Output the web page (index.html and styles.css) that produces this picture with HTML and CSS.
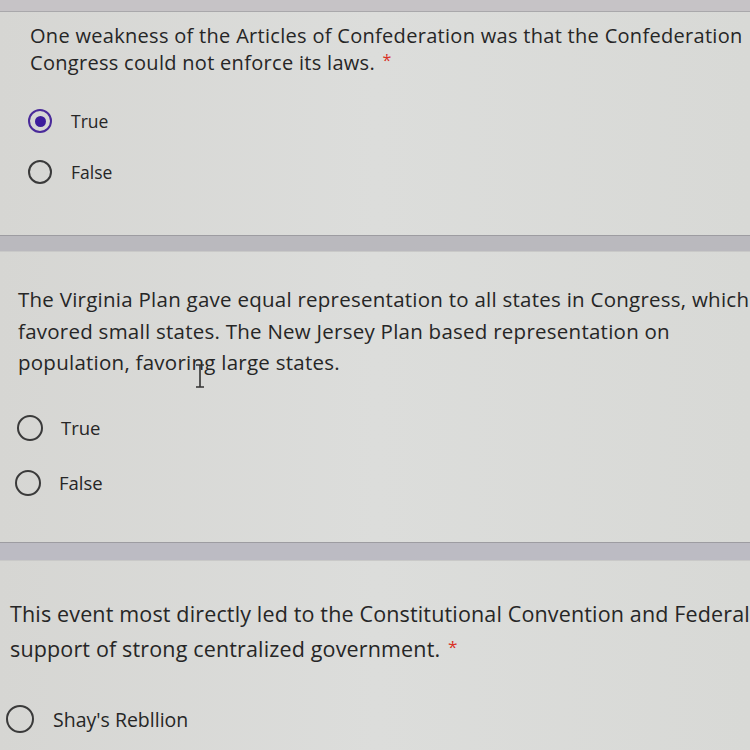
FILE: index.html
```
<!DOCTYPE html>
<html>
<head>
<meta charset="utf-8">
<link rel="stylesheet" href="styles.css">
</head>
<body>
<div class="page">
  <div class="topband"></div>
  <section class="card c1">
    <div class="q">One weakness of the Articles of Confederation was that the Confederation<br>Congress could not enforce its laws. <span class="req">*</span></div>
    <div class="opts">
      <div class="opt"><span class="radio on"><span class="dot"></span></span><span class="lbl">True</span></div>
      <div class="opt"><span class="radio"></span><span class="lbl">False</span></div>
    </div>
  </section>
  <div class="gap"></div>
  <section class="card c2">
    <div class="q">The Virginia Plan gave equal representation to all states in Congress, which<br>favored small states. The New Jersey Plan based representation on<br>population, favoring large states.</div>
    <svg class="ibeam" width="12" height="24" viewBox="0 0 12 24"><path d="M2 1h8M6 1v22M2 23h8" stroke="#333" stroke-width="1.6" fill="none"/></svg>
    <div class="opts">
      <div class="opt"><span class="radio"></span><span class="lbl">True</span></div>
      <div class="opt"><span class="radio"></span><span class="lbl">False</span></div>
    </div>
  </section>
  <div class="gap g2"></div>
  <section class="card c3">
    <div class="q">This event most directly led to the Constitutional Convention and Federalists'<br>support of strong centralized government. <span class="req">*</span></div>
    <div class="opts">
      <div class="opt"><span class="radio"></span><span class="lbl">Shay's Rebllion</span></div>
    </div>
  </section>
</div>
</body>
</html>
```
FILE: styles.css
```
html, body {
  margin: 0;
  padding: 0;
  background: #d9d9d6;
}
.page {
  width: 750px;
  height: 750px;
  overflow: hidden;
  display: flex;
  flex-direction: column;
  font-family: "Open Sans", "Liberation Sans", sans-serif;
  color: #262626;
}
.topband {
  height: 11px;
  flex: none;
  background: #c6c3c6;
  border-bottom: 1.5px solid #a9a8ab;
}
.card {
  flex: none;
  background: linear-gradient(90deg, #d6d6d3 0%, #dcdddb 50%, #d8d9d6 100%);
  position: relative;
}
.gap {
  flex: none;
  height: 15px;
  background: #bab9be;
  border-top: 1.5px solid #9d9ca1;
  border-bottom: 1px solid #c9c9c8;
}
.g2 {
  height: 17px;
  background: #bcbbc3;
}
.q {
  white-space: nowrap;
}
.req {
  color: #d93025;
  font-size: 0.8em;
  line-height: 0;
  vertical-align: 0.25em;
  margin-left: 2px;
}
.opts {
  display: flex;
  flex-direction: column;
}
.opt {
  display: flex;
  align-items: center;
}
.radio {
  flex: none;
  box-sizing: border-box;
  border-radius: 50%;
  border: 2.5px solid #3a3a3a;
  display: flex;
  align-items: center;
  justify-content: center;
}
.radio.on {
  border-color: #4a2a9a;
}
.dot {
  border-radius: 50%;
  background: #3d1d9c;
}

/* card 1 */
.c1 {
  height: 223px;
  padding: 11px 0 0 30px;
  box-sizing: border-box;
}
.c1 .q {
  font-size: 20px;
  letter-spacing: 0.3px;
  line-height: 26.5px;
}
.c1 .opts {
  margin-top: 33px;
  margin-left: -2px;
  gap: 27px;
}
.c1 .opt {
  height: 24px;
}
.c1 .radio {
  width: 24px;
  height: 24px;
}
.c1 .dot {
  width: 11px;
  height: 11px;
}
.c1 .lbl {
  margin-left: 19px;
  font-size: 17.5px;
}

/* card 2 */
.c2 {
  height: 290px;
  padding: 32px 0 0 18px;
  box-sizing: border-box;
}
.c2 .q {
  font-size: 20.5px;
  letter-spacing: 0.25px;
  line-height: 31.5px;
}
.c2 .ibeam {
  position: absolute;
  left: 194px;
  top: 112px;
}
.c2 .opts {
  margin-top: 36px;
  margin-left: -1px;
  gap: 29px;
}
.c2 .opt {
  height: 26px;
}
.c2 .opt + .opt {
  margin-left: -2px;
}
.c2 .radio {
  width: 26px;
  height: 26px;
}
.c2 .lbl {
  margin-left: 18px;
  font-size: 18.5px;
}

/* card 3 */
.c3 {
  flex: 1;
  padding: 35px 0 0 10px;
  box-sizing: border-box;
}
.c3 .q {
  font-size: 21.5px;
  letter-spacing: 0.15px;
  line-height: 35px;
}
.c3 .opts {
  margin-top: 39px;
  margin-left: -4px;
}
.c3 .opt {
  height: 28px;
}
.c3 .radio {
  width: 28px;
  height: 28px;
}
.c3 .lbl {
  margin-left: 19px;
  font-size: 19.5px;
}
```
